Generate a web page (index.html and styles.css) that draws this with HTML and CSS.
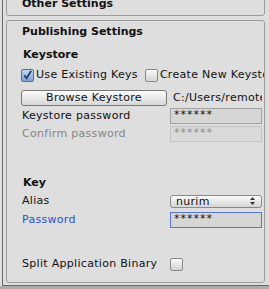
FILE: index.html
```html
<!DOCTYPE html>
<html lang="en">
<head>
  <meta charset="UTF-8">
  <title>Publishing Settings</title>
  <link rel="stylesheet" href="styles.css">
</head>
<body>
<div class="frame">
  <section class="group group-collapsed">
    <h3 class="group-title">Other Settings</h3>
  </section>

  <section class="group">
    <h3 class="group-title">Publishing Settings</h3>

    <h4 class="sub-title">Keystore</h4>
    <div class="row check-row">
      <label class="check">
        <span class="box checked">
          <svg width="12" height="12" viewBox="0 0 12 12"><path d="M2.5 6.2 L5 9.5 L10 1.5" fill="none" stroke="#1d3c78" stroke-width="2"/></svg>
        </span>
        Use Existing Keys
      </label>
      <label class="check">
        <span class="box"></span>
        Create New Keystore
      </label>
    </div>
    <div class="row browse-row">
      <button type="button" class="btn">Browse Keystore</button>
      <span class="path">C:/Users/remote/keystore</span>
    </div>
    <div class="row field-row">
      <span class="label">Keystore password</span>
      <span class="field">******</span>
    </div>
    <div class="row field-row disabled">
      <span class="label">Confirm password</span>
      <span class="field">******</span>
    </div>

    <h4 class="sub-title key-title">Key</h4>
    <div class="row field-row alias-row">
      <span class="label">Alias</span>
      <span class="select">nurim
        <svg class="arrows" width="5" height="8" viewBox="0 0 5 8"><path d="M2.5 0 L5 3 H0 Z M2.5 8 L5 5 H0 Z" fill="#333"/></svg>
      </span>
    </div>
    <div class="row field-row focused">
      <span class="label">Password</span>
      <span class="field">******</span>
    </div>
    <div class="row field-row split-row">
      <span class="label">Split Application Binary</span>
      <span class="box"></span>
    </div>
  </section>
</div>
<div class="statusbar"></div>
</body>
</html>
```

FILE: styles.css
```css
body {
  margin: 0;
  background: #dedede;
  font-family: "DejaVu Sans", Verdana, sans-serif;
  font-size: 11px;
  color: #111;
  overflow: hidden;
}
.frame {
  margin-left: 2px;
  height: 286px;
  box-sizing: border-box;
  border-left: 1px solid #686868;
  border-bottom: 1px solid #686868;
  padding: 0 4px 0 3px;
  overflow: hidden;
}
.statusbar { height: 3px; background: #ababab; }

.group {
  border: 1px solid #9c9c9c;
  border-radius: 3px;
  padding: 4px 2px 0 14px;
  height: 263px;
  box-sizing: border-box;
  overflow: hidden;
}
.group-collapsed {
  height: 20px;
  margin-top: -4px;
  margin-bottom: 4px;
  padding-top: 0;
}
.group-title {
  margin: 0 0 0 1px;
  font-size: 11px;
  line-height: 13px;
  font-weight: bold;
}
.sub-title {
  margin: 10px 0 0 2px;
  font-size: 11px;
  line-height: 13px;
  font-weight: bold;
}
.key-title { margin-top: 34px; }

.row {
  display: flex;
  align-items: center;
  height: 16px;
  line-height: 16px;
  white-space: nowrap;
  letter-spacing: 0.3px;
}
.check-row { margin-top: 6px; }
.check { display: flex; align-items: center; gap: 2px; margin-right: 7px; flex: none; }

.box {
  width: 11px;
  height: 11px;
  border: 1px solid #8a8a8a;
  border-radius: 2px;
  background: linear-gradient(#fafafa, #d2d2d2);
  flex: none;
  display: flex;
  align-items: center;
  justify-content: center;
}
.box.checked {
  background: linear-gradient(#c4d6f0, #7d9fd4);
  border-color: #51709e;
}
.box svg { display: block; }

.browse-row { margin-top: 7px; }
.btn {
  width: 146px;
  height: 16px;
  flex: none;
  padding: 0;
  font: inherit;
  letter-spacing: 0.3px;
  color: #111;
  border: 1px solid #7a7a7a;
  border-radius: 3px;
  background: linear-gradient(#fdfdfd, #d6d6d6);
  margin-right: 6px;
  line-height: 14px;
}
.path { overflow: hidden; }

.field-row { margin-top: 2px; }
.label { width: 148px; flex: none; margin-left: 1px; }
.field {
  width: 92px;
  height: 16px;
  box-sizing: border-box;
  border: 1px solid #a2a2a2;
  background: #d6d6d6;
  padding-left: 3px;
  line-height: 12px;
  letter-spacing: 1px;
  flex: none;
}
.disabled .label { color: #858585; }
.disabled .field { border-color: #c3c3c3; color: #8c8c8c; background: #d9d9d9; }
.alias-row { margin-top: 4px; }
.focused { margin-top: 3px; }
.focused .label { color: #2a4fd6; }
.focused .field { border-color: #5a77d8; }

.select {
  width: 92px;
  height: 13px;
  box-sizing: border-box;
  border: 1px solid #8a8a8a;
  border-radius: 3px;
  background: linear-gradient(#fbfbfb, #d5d5d5);
  padding: 0 6px 0 5px;
  line-height: 11px;
  display: flex;
  align-items: center;
  justify-content: space-between;
  flex: none;
}
.arrows { display: block; }
.split-row { margin-top: 28px; }
```
